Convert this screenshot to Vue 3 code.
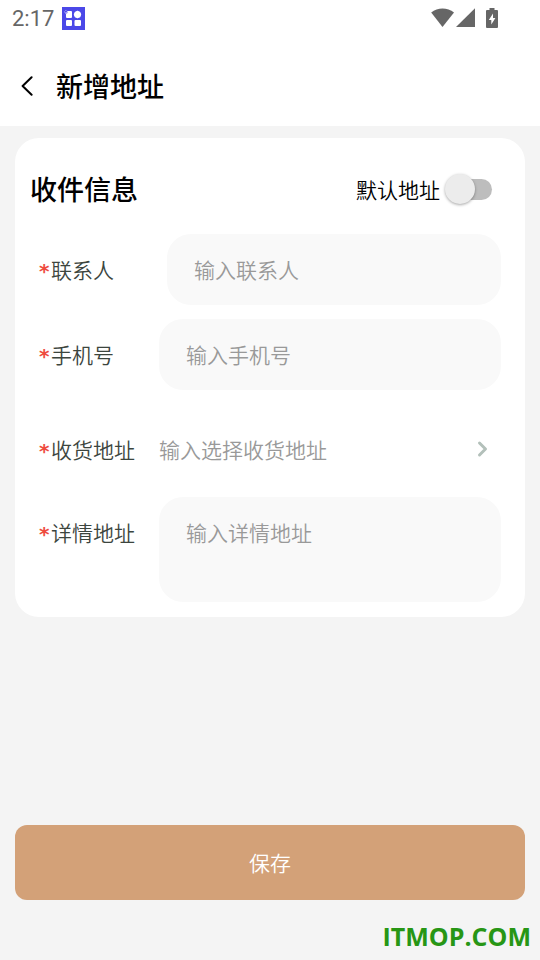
<script setup>
import { ref } from 'vue'

const isDefault = ref(false)
const contact = ref('')
const phone = ref('')
const detail = ref('')
</script>

<template>
  <div class="page">
    <header class="top">
      <div class="status">
        <span class="time">2:17</span>
        <svg class="app-icon" viewBox="0 0 23 23" aria-hidden="true">
          <rect width="23" height="23" fill="#4b48e8" />
          <rect x="4" y="4" width="6" height="7" rx="1" fill="#fff" />
          <circle cx="15.500" cy="7.500" r="3.500" fill="#fff" />
          <path d="M15.500 3.600l3.900 3.900-3.900 3.900-3.900-3.900z" fill="#fff" />
          <rect x="4" y="13" width="6" height="6" rx="1" fill="#fff" />
          <rect x="12.500" y="13" width="6.500" height="6" rx="1" fill="#fff" />
          <circle cx="4" cy="5" r="1.600" fill="#4b48e8" stroke="#b9b8fa" stroke-width=".8" stroke-dasharray="1.200 .8" />
          <path d="M3.300 5.100l.8.8 1.500-1.700" fill="none" stroke="#d8d8ff" stroke-width=".7" />
        </svg>
        <div class="indicators">
          <svg width="24" height="20" viewBox="0 0 24 20" aria-hidden="true">
            <path d="M.2 4.600C3.500 2 7.500.6 11.500.6s8.300 1.400 11.500 4L11.500 19z" fill="#666" />
          </svg>
          <svg width="20" height="20" viewBox="0 0 20 20" aria-hidden="true">
            <path d="M19 .3V19H0z" fill="#666" />
          </svg>
          <svg class="battery" width="12" height="20" viewBox="0 0 12 20" aria-hidden="true">
            <path d="M3.500 0h5v2H11q1 0 1 1v16q0 1-1 1H1q-1 0-1-1V3q0-1 1-1h2.500z" fill="#666" />
            <path d="M7 5.500L2.800 12h2.500v4.500L9.400 10H7z" fill="#fff" />
          </svg>
        </div>
      </div>
      <nav class="nav">
        <button class="back" type="button" aria-label="返回">
          <svg width="12" height="20" viewBox="0 0 12 20" fill="none" aria-hidden="true">
            <path d="M10.600 1.200L1.600 10l9 8.800" stroke="#000" stroke-width="2" stroke-linecap="round" stroke-linejoin="round" />
          </svg>
        </button>
        <h1>新增地址</h1>
      </nav>
    </header>

    <form class="body" @submit.prevent>
      <section class="card">
        <div class="card-head">
          <h2>收件信息</h2>
          <label class="default">
            <span>默认地址</span>
            <input v-model="isDefault" class="switch" type="checkbox" role="switch" />
          </label>
        </div>

        <div class="row contact">
          <label class="name" for="contact"><span class="star">*</span>联系人</label>
          <input id="contact" v-model="contact" class="field" type="text" placeholder="输入联系人" />
        </div>
        <div class="row">
          <label class="name" for="phone"><span class="star">*</span>手机号</label>
          <input id="phone" v-model="phone" class="field" type="tel" placeholder="输入手机号" />
        </div>
        <div class="row region">
          <label class="name" for="region"><span class="star">*</span>收货地址</label>
          <button id="region" class="picker" type="button">
            <span>输入选择收货地址</span>
            <svg width="12" height="18" viewBox="0 0 12 18" fill="none" aria-hidden="true">
              <path d="M2.500 3L8.500 9l-6 6" stroke="#b3c0ba" stroke-width="3" stroke-linecap="round" stroke-linejoin="round" />
            </svg>
          </button>
        </div>
        <div class="row tall">
          <label class="name" for="detail"><span class="star">*</span>详情地址</label>
          <textarea id="detail" v-model="detail" class="field area" placeholder="输入详情地址"></textarea>
        </div>
      </section>

      <button class="save" type="submit">保存</button>
    </form>

    <footer class="mark">ITMOP.COM</footer>
  </div>
</template>

<style>
body {
  margin: 0;
  background: #f4f4f4;
}
</style>

<style scoped>
.page,
.page * {
  box-sizing: border-box;
}
.page {
  display: flex;
  flex-direction: column;
  min-height: 100vh;
  background: #f4f4f4;
  color: #000;
  font-family: "Noto Sans CJK SC", sans-serif;
  font-size: 21px;
  font-weight: 350;
  line-height: 30px;
}
button,
input,
textarea {
  margin: 0;
  border: 0;
  font: inherit;
}
.top {
  background: #fff;
}
.status {
  display: flex;
  align-items: center;
  height: 36px;
  padding: 0 42px 0 12px;
}
.time {
  padding-top: 2px;
  color: #666;
  font-family: Roboto, sans-serif;
  font-size: 22px;
  font-weight: 400;
}
.app-icon {
  width: 23px;
  height: 23px;
  margin-left: 8px;
}
.indicators {
  display: flex;
  align-items: center;
  gap: 1px;
  margin-left: auto;
}
.battery {
  margin-left: 9px;
}
.nav {
  display: flex;
  align-items: center;
  gap: 12px;
  height: 90px;
  padding: 10px 10px 0;
}
.back {
  display: flex;
  align-items: center;
  justify-content: center;
  width: 34px;
  height: 40px;
  padding: 0;
  background: none;
}
h1,
h2 {
  margin: 0;
  font-size: 27px;
  font-weight: 500;
  line-height: 40px;
}
.body {
  display: flex;
  flex: 1;
  flex-direction: column;
  justify-content: space-between;
  gap: 24px;
  padding: 12px 15px 0;
}
.card {
  display: flex;
  flex-direction: column;
  gap: 14px;
  padding: 24px 24px 15px 15px;
  border-radius: 24px;
  background: #fff;
}
.card-head {
  display: flex;
  align-items: center;
  justify-content: space-between;
  height: 58px;
  padding: 0 9px 4px 0;
}
.default {
  display: flex;
  align-items: center;
  gap: 5px;
}
.switch {
  display: flex;
  align-items: center;
  width: 47px;
  height: 30px;
  appearance: none;
  background: none;
}
.switch::before {
  content: "";
  z-index: 1;
  flex: none;
  width: 30px;
  height: 30px;
  border-radius: 50%;
  background: #ececec;
  box-shadow: 0 1px 3px rgba(0, 0, 0, 0.35);
}
.switch::after {
  content: "";
  flex: none;
  width: 40px;
  height: 21px;
  margin-left: -23px;
  border-radius: 11px;
  background: #bdbdbd;
}
.switch:checked {
  flex-direction: row-reverse;
}
.switch:checked::after {
  margin: 0 -23px 0 0;
  background: #d3a178;
}
.row {
  display: flex;
  align-items: center;
}
.name {
  display: flex;
  align-items: center;
  flex: none;
  width: 129px;
  padding-left: 9px;
  color: #3c453e;
}
.contact .name {
  width: 137px;
}
.star {
  width: 12px;
  padding-top: 4px;
  color: #ee4b3e;
  font-family: "DejaVu Sans", sans-serif;
  font-size: 20px;
  font-weight: 700;
  line-height: 22px;
}
.field {
  flex: 1;
  min-width: 0;
  height: 71px;
  padding: 0 27px 2px;
  border-radius: 24px;
  background: #f9f9f9;
  color: #000;
}
.row .name {
  padding-bottom: 2px;
}
.field::placeholder {
  color: #999;
  opacity: 1;
}
.region {
  height: 79px;
  padding-top: 30px;
  align-items: flex-start;
}
.picker {
  display: flex;
  flex: 1;
  align-items: center;
  justify-content: space-between;
  padding: 0 12px 0 0;
  background: none;
  color: #999;
}
.tall {
  align-items: flex-start;
}
.tall .name {
  padding-top: 20px;
}
.area {
  height: 105px;
  padding: 20px 27px;
  resize: none;
}
.save {
  height: 75px;
  padding: 0 0 2px;
  border-radius: 12px;
  background: #d3a178;
  color: #fff;
}
.mark {
  height: 60px;
  padding: 19px 9px 0;
  color: #279615;
  font-family: "Open Sans", sans-serif;
  font-size: 25px;
  font-weight: 700;
  line-height: 34px;
  text-align: right;
}
</style>
